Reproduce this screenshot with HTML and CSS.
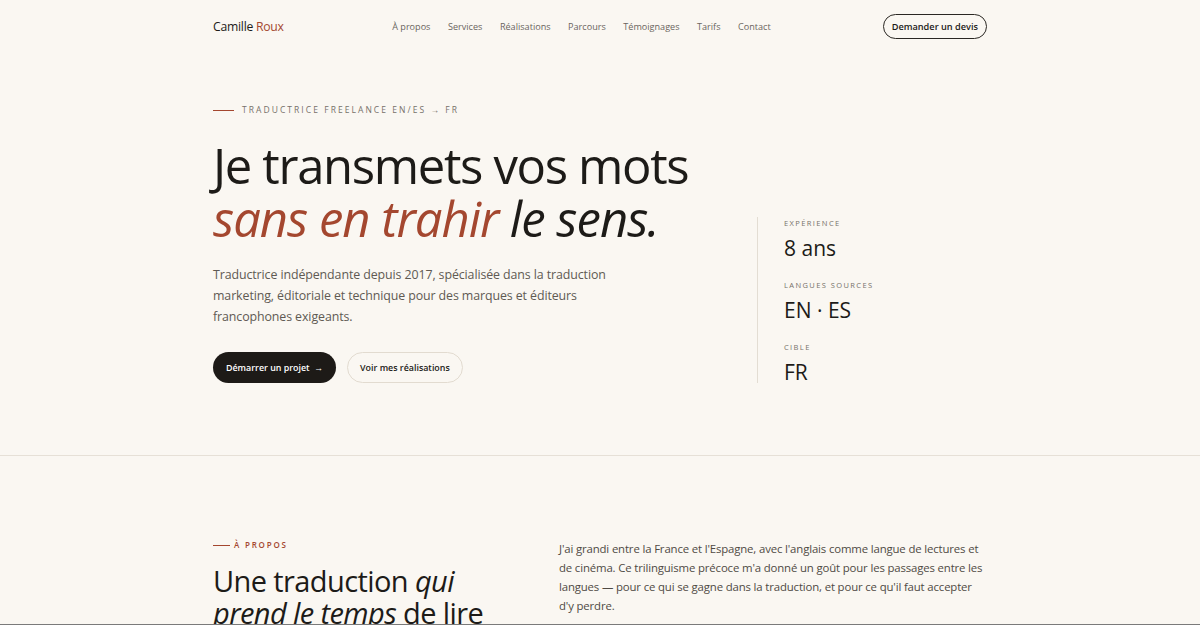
FILE: index.html
```html
<!DOCTYPE html>
<html lang="fr">
<head>
<meta charset="utf-8">
<title>Camille Roux — Traductrice</title>
<link rel="stylesheet" href="styles.css">
</head>
<body>
<header class="nav">
  <div class="wrap nav-inner">
    <a class="logo" href="#">Camille <span class="accent">Roux</span></a>
    <nav class="links">
      <a href="#">À propos</a>
      <a href="#">Services</a>
      <a href="#">Réalisations</a>
      <a href="#">Parcours</a>
      <a href="#">Témoignages</a>
      <a href="#">Tarifs</a>
      <a href="#">Contact</a>
    </nav>
    <a class="btn-outline" href="#">Demander un devis</a>
  </div>
</header>

<section class="hero">
  <div class="wrap hero-grid">
    <div class="hero-main">
      <p class="eyebrow"><span class="rule"></span>Traductrice freelance EN/ES → FR</p>
      <h1 class="title">Je transmets vos mots<br><em class="accent">sans en trahir</em> <em>le sens.</em></h1>
      <p class="lead">Traductrice indépendante depuis 2017, spécialisée dans la traduction marketing, éditoriale et technique pour des marques et éditeurs francophones exigeants.</p>
      <div class="actions">
        <a class="btn-dark" href="#">Démarrer un projet&nbsp; →</a>
        <a class="btn-light" href="#">Voir mes réalisations</a>
      </div>
    </div>
    <aside class="stats">
      <div class="stat">
        <div class="stat-label">Expérience</div>
        <div class="stat-value">8 ans</div>
      </div>
      <div class="stat">
        <div class="stat-label">Langues sources</div>
        <div class="stat-value">EN · ES</div>
      </div>
      <div class="stat">
        <div class="stat-label">Cible</div>
        <div class="stat-value">FR</div>
      </div>
    </aside>
  </div>
</section>

<section class="about">
  <div class="wrap about-grid">
    <div>
      <p class="eyebrow eyebrow-accent"><span class="rule short"></span>À propos</p>
      <h2 class="about-title">Une traduction <em>qui prend le temps</em> de lire</h2>
    </div>
    <div class="about-text">
      <p>J'ai grandi entre la France et l'Espagne, avec l'anglais comme langue de lectures et de cinéma. Ce trilinguisme précoce m'a donné un goût pour les passages entre les langues — pour ce qui se gagne dans la traduction, et pour ce qu'il faut accepter d'y perdre.</p>
    </div>
  </div>
</section>
<div class="edge"></div>
</body>
</html>
```

FILE: styles.css
```css
* { box-sizing: border-box; }
html, body { margin: 0; padding: 0; }
body {
  background: #faf7f2;
  color: #1d1b18;
  font-family: "Open Sans", "Noto Sans", sans-serif;
  overflow: hidden;
}
a { color: inherit; text-decoration: none; }
p, h1, h2 { margin: 0; }
em { font-style: italic; }
.accent { color: #a4472f; }

.wrap { width: 774px; margin: 0 auto; }

.edge { position: fixed; left: 0; right: 0; bottom: 0; height: 1px; background: #7a7a7a; }

/* nav */
.nav { height: 52px; }
.nav-inner { height: 52px; display: flex; align-items: center; }
.logo { font-size: 12.2px; letter-spacing: -0.25px; color: #1d1b18; }
.links { display: flex; gap: 17.5px; margin-left: auto; margin-right: 112px; }
.links a { font-size: 9.1px; color: #6a655e; }
.btn-outline {
  font-size: 9.2px; font-weight: 600; color: #1d1b18;
  border: 1px solid #2a2723; border-radius: 999px;
  padding: 5px 8px; line-height: 13px;
}

/* hero */
.hero { border-bottom: 1px solid #e6e0d7; padding: 52px 0 72px; }
.hero-grid { display: grid; grid-template-columns: 1fr 230px; align-items: end; }
.eyebrow {
  display: flex; align-items: center;
  font-size: 8.5px; letter-spacing: 2.05px; text-transform: uppercase;
  color: #77716a; line-height: 12px;
}
.rule { display: inline-block; width: 21px; height: 1px; background: #a4472f; margin-right: 8px; }
.rule.short { width: 17px; margin-right: 4px; }
.title {
  margin-top: 23px;
  font-size: 49px; font-weight: 400; line-height: 53px; letter-spacing: -1.35px;
  color: #1d1b18;
}
.title em { letter-spacing: -1px; }
.lead {
  margin-top: 19px; width: 400px;
  font-size: 12.4px; line-height: 21px; color: #605a53; letter-spacing: -0.1px;
}
.actions { display: flex; gap: 11px; margin-top: 25px; }
.btn-dark, .btn-light {
  height: 31px; display: inline-flex; align-items: center;
  border-radius: 999px; font-size: 8.9px; font-weight: 600;
}
.btn-dark { background: #1d1a17; color: #fff; padding: 0 13px; }
.btn-light { border: 1px solid #e2dbd0; color: #1d1b18; padding: 0 12px; }

.stats { border-left: 1px solid #e3ddd3; padding-left: 26px; padding-top: 1px; height: 166px; }
.stat { height: 62px; }
.stat-label {
  font-size: 7.5px; letter-spacing: 1.4px; text-transform: uppercase; color: #77716a;
  line-height: 11px;
}
.stat-value { font-size: 21px; line-height: 28px; margin-top: 5px; color: #1d1b18; }

/* about */
.about { padding-top: 83px; }
.about-grid { display: grid; grid-template-columns: 314px 1fr; gap: 32px; }
.eyebrow-accent { color: #a4472f; font-weight: 600; letter-spacing: 1.8px; font-size: 8px; }
.about-title {
  margin-top: 14px; font-size: 29px; font-weight: 400; line-height: 32px;
  letter-spacing: -0.6px; color: #1d1b18; width: 300px;
}
.about-text { padding-top: 0; }
.about-text p { font-size: 11.4px; line-height: 19px; color: #4f4a44; letter-spacing: -0.15px; }
```
